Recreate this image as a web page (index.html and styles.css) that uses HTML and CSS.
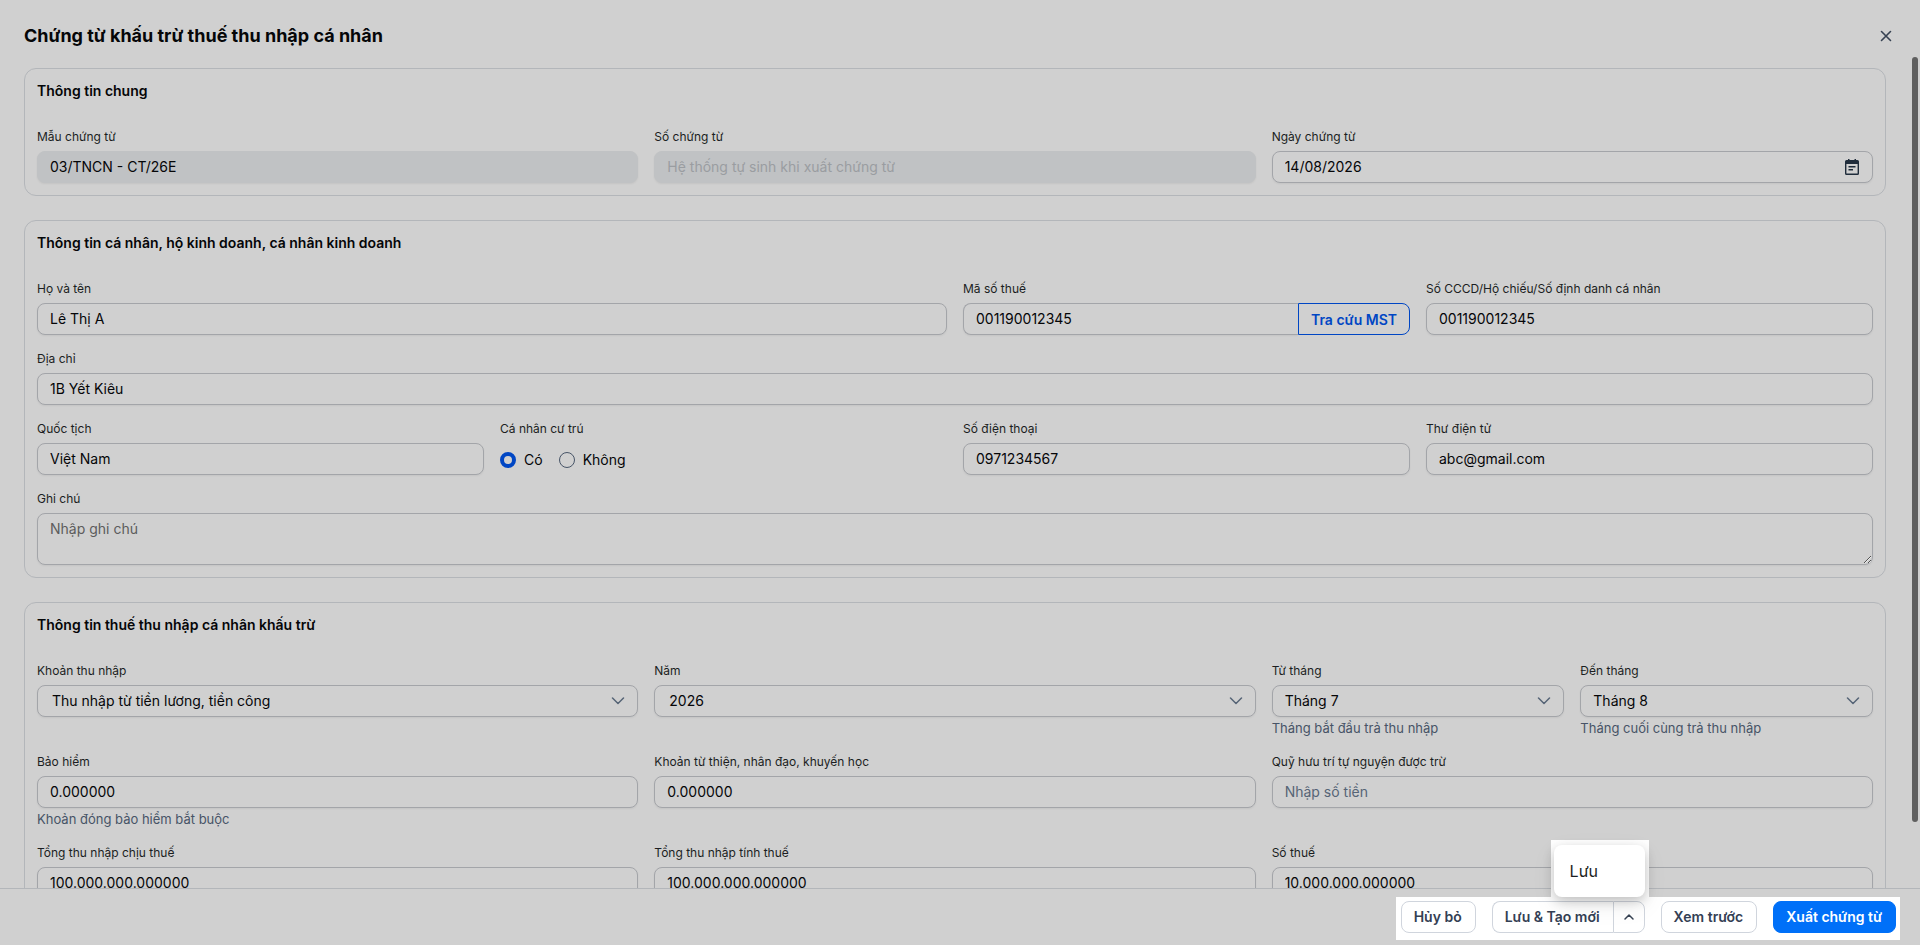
FILE: index.html
```html
<!DOCTYPE html>
<html lang="vi">
<head>
<meta charset="utf-8" />
<meta name="viewport" content="width=device-width, initial-scale=1" />
<title>Chứng từ khấu trừ thuế thu nhập cá nhân</title>
<link rel="stylesheet" href="styles.css">
</head>

<body>
<div class="page">
	<header class="head">
		<h1>Chứng từ khấu trừ thuế thu nhập cá nhân</h1>
		<button type="button" class="close" aria-label="Đóng">
			<svg width="12" height="12" viewBox="0 0 12 12"><path d="M1.5 1.5l9 9M10.5 1.5l-9 9" fill="none" stroke="#364152" stroke-width="1.6" stroke-linecap="round"/></svg>
		</button>
	</header>

	<div class="main">
		<form class="content" id="form">
			<section class="card">
				<h2>Thông tin chung</h2>
				<div class="grid">
					<div class="field col4">
						<label for="mau">Mẫu chứng từ</label>
						<input type="text" id="mau" class="box" value="03/TNCN - CT/26E" disabled>
					</div>
					<div class="field col4">
						<label for="so">Số chứng từ</label>
						<input type="text" id="so" class="box" placeholder="Hệ thống tự sinh khi xuất chứng từ" disabled>
					</div>
					<div class="field col4">
						<label for="ngay">Ngày chứng từ</label>
						<div class="wrap">
							<input type="text" id="ngay" class="box" value="14/08/2026">
							<svg class="icon_date" width="16" height="18" viewBox="0 0 16 18"><path fill="#1f2c3b" fill-rule="evenodd" d="M4 1h1.500v1h5V1H12v1h1.500A1.500 1.500 0 0 1 15 3.500v12a1.500 1.500 0 0 1-1.500 1.500h-11A1.500 1.500 0 0 1 1 15.500v-12A1.500 1.500 0 0 1 2.500 2H4zM2.400 6v9.600h11.200V6z"/><path d="M4.500 8.700h7M4.500 11.700h4.500" fill="none" stroke="#1f2c3b" stroke-width="1.500"/></svg>
						</div>
					</div>
				</div>
			</section>

			<section class="card">
				<h2>Thông tin cá nhân, hộ kinh doanh, cá nhân kinh doanh</h2>
				<div class="grid">
					<div class="field col6">
						<label for="ten">Họ và tên</label>
						<input type="text" id="ten" class="box" value="Lê Thị A">
					</div>
					<div class="field col3">
						<label for="mst">Mã số thuế</label>
						<div class="group">
							<input type="text" id="mst" class="box" value="001190012345">
							<button type="button" class="search">Tra cứu MST</button>
						</div>
					</div>
					<div class="field col3">
						<label for="cccd">Số CCCD/Hộ chiếu/Số định danh cá nhân</label>
						<input type="text" id="cccd" class="box" value="001190012345">
					</div>
					<div class="field col12">
						<label for="diachi">Địa chỉ</label>
						<input type="text" id="diachi" class="box" value="1B Yết Kiêu">
					</div>
					<div class="field col3">
						<label for="quoctich">Quốc tịch</label>
						<input type="text" id="quoctich" class="box" value="Việt Nam">
					</div>
					<fieldset class="field col3">
						<legend>Cá nhân cư trú</legend>
						<div class="radios">
							<label><input type="radio" name="cutru" checked>Có</label>
							<label><input type="radio" name="cutru">Không</label>
						</div>
					</fieldset>
					<div class="field col3">
						<label for="sdt">Số điện thoại</label>
						<input type="text" id="sdt" class="box" value="0971234567">
					</div>
					<div class="field col3">
						<label for="email">Thư điện tử</label>
						<input type="text" id="email" class="box" value="abc@gmail.com">
					</div>
					<div class="field col12">
						<label for="ghichu">Ghi chú</label>
						<textarea id="ghichu" class="box note" placeholder="Nhập ghi chú"></textarea>
					</div>
				</div>
			</section>

			<section class="card">
				<h2>Thông tin thuế thu nhập cá nhân khấu trừ</h2>
				<div class="grid">
					<div class="field col4">
						<label for="khoan">Khoản thu nhập</label>
						<div class="wrap">
							<select id="khoan" class="box wide"><option>Thu nhập từ tiền lương, tiền công</option></select>
							<svg class="arrow" width="14" height="8" viewBox="0 0 14 8"><path d="M1.500 1l5.500 5.500L12.500 1" fill="none" stroke="#566476" stroke-width="1.500" stroke-linecap="round" stroke-linejoin="round"/></svg>
						</div>
					</div>
					<div class="field col4">
						<label for="nam">Năm</label>
						<div class="wrap">
							<select id="nam" class="box wide"><option>2026</option></select>
							<svg class="arrow" width="14" height="8" viewBox="0 0 14 8"><path d="M1.500 1l5.500 5.500L12.500 1" fill="none" stroke="#566476" stroke-width="1.500" stroke-linecap="round" stroke-linejoin="round"/></svg>
						</div>
					</div>
					<div class="field col2">
						<label for="tu">Từ tháng</label>
						<div class="wrap">
							<select id="tu" class="box"><option>Tháng 7</option></select>
							<svg class="arrow" width="14" height="8" viewBox="0 0 14 8"><path d="M1.500 1l5.500 5.500L12.500 1" fill="none" stroke="#566476" stroke-width="1.500" stroke-linecap="round" stroke-linejoin="round"/></svg>
						</div>
						<p class="hint">Tháng bắt đầu trả thu nhập</p>
					</div>
					<div class="field col2">
						<label for="den">Đến tháng</label>
						<div class="wrap">
							<select id="den" class="box"><option>Tháng 8</option></select>
							<svg class="arrow" width="14" height="8" viewBox="0 0 14 8"><path d="M1.500 1l5.500 5.500L12.500 1" fill="none" stroke="#566476" stroke-width="1.500" stroke-linecap="round" stroke-linejoin="round"/></svg>
						</div>
						<p class="hint">Tháng cuối cùng trả thu nhập</p>
					</div>
					<div class="field col4">
						<label for="baohiem">Bảo hiểm</label>
						<input type="text" id="baohiem" class="box" value="0.000000">
						<p class="hint">Khoản đóng bảo hiểm bắt buộc</p>
					</div>
					<div class="field col4">
						<label for="tuthien">Khoản từ thiện, nhân đạo, khuyến học</label>
						<input type="text" id="tuthien" class="box" value="0.000000">
					</div>
					<div class="field col4">
						<label for="huutri">Quỹ hưu trí tự nguyện được trừ</label>
						<input type="text" id="huutri" class="box" placeholder="Nhập số tiền">
					</div>
					<div class="field col4">
						<label for="chiuthue">Tổng thu nhập chịu thuế</label>
						<input type="text" id="chiuthue" class="box" value="100.000.000.000000">
					</div>
					<div class="field col4">
						<label for="tinhthue">Tổng thu nhập tính thuế</label>
						<input type="text" id="tinhthue" class="box" value="100.000.000.000000">
					</div>
					<div class="field col4">
						<label for="sothue">Số thuế</label>
						<input type="text" id="sothue" class="box" value="10.000.000.000000">
					</div>
				</div>
			</section>
		</form>
		<div class="track"><div class="thumb"></div></div>
	</div>

	<footer class="foot">
		<div class="actions">
			<button type="button" class="btn">Hủy bỏ</button>
			<div class="split">
				<button type="button" class="btn btn_left">Lưu &amp; Tạo mới</button>
				<button type="button" class="btn btn_right" aria-label="Thêm">
					<svg width="12" height="8" viewBox="0 0 12 8"><path d="M2 6l4-4 4 4" fill="none" stroke="#364152" stroke-width="1.500" stroke-linecap="round" stroke-linejoin="round"/></svg>
				</button>
				<div class="pop">
					<div class="menu"><button type="button">Lưu</button></div>
				</div>
			</div>
			<button type="button" class="btn">Xem trước</button>
			<button type="submit" form="form" class="btn btn_blue">Xuất chứng từ</button>
		</div>
	</footer>
</div>
</body>
</html>
```
FILE: styles.css
```css
* {box-sizing:border-box;}
body {margin:0;background:#d0d0d0;color:#050608;font:14px/20px Inter,"Noto Sans",sans-serif;}
h1,h2,p {margin:0;}
button,input,select,textarea {font:inherit;color:inherit;margin:0;}
button {cursor:pointer;}
svg {display:block;}

.page {height:100vh;display:flex;flex-direction:column;overflow:hidden;}

/* header */
.head {display:flex;align-items:center;justify-content:space-between;padding:22px 24px 6px;flex:none;}
.head h1 {font-size:18px;line-height:28px;font-weight:650;}
.close {width:20px;height:20px;padding:4px;border:0;background:none;}

/* body */
.main {flex:1;min-height:0;display:flex;}
.content {flex:1;min-width:0;display:flex;flex-direction:column;gap:24px;padding:12px 26px 24px 24px;overflow-y:auto;scrollbar-width:none;}
.track {flex:none;width:8px;padding:1px 2px 0 0;}
.thumb {height:92%;border-radius:3px;background:#5f5f5f;}

.card {flex:none;border:1px solid #b3b6ba;border-radius:12px;padding:12px;}
.card h2 {font-size:14px;line-height:20px;font-weight:600;margin-bottom:27px;}
.grid {display:grid;grid-template-columns:repeat(12,minmax(0,1fr));gap:15px 16px;}
.col2 {grid-column:span 2;}
.col3 {grid-column:span 3;}
.col4 {grid-column:span 4;}
.col6 {grid-column:span 6;}
.col12 {grid-column:span 12;}

.field {min-width:0;margin:0;padding:0;border:0;}
.field > label,.field legend {display:block;padding:0;margin-bottom:5px;font-size:12px;line-height:18px;color:#1b1e22;}
.box {display:block;width:100%;height:32px;padding:0 12px 2px;border:1px solid #a3a5a9;border-radius:8px;background:#d0d0d0;box-shadow:0 1px 2px rgba(0,0,0,.06);outline:none;appearance:none;}
select.box {padding-bottom:0;}
.box::placeholder {color:#566476;opacity:1;}
.box:disabled {background:#c0c2c4;border-color:#c0c2c4;color:#050608;opacity:1;}
.box:disabled::placeholder {color:#9a9da1;}
.note {height:52px;padding:5px 12px;resize:vertical;}
.note::placeholder {color:#5c5c5c;}
.wide {padding-left:14px;}
.wrap {position:relative;}
.arrow {position:absolute;right:13px;top:12px;pointer-events:none;}
.icon_date {position:absolute;right:13px;top:7px;pointer-events:none;}
.hint {margin-top:2px;padding-bottom:1px;font-size:13px;line-height:18px;color:#475467;}

.group {display:flex;}
.group .box {flex:1;min-width:0;border-right:0;border-radius:8px 0 0 8px;}
.search {flex:none;height:32px;padding:1px 12px 0;border:1px solid #0046c4;border-radius:0 8px 8px 0;background:none;color:#0046c4;font-weight:600;}

.radios {display:flex;gap:16px;height:32px;padding-top:1px;align-items:center;}
.radios label {display:flex;align-items:center;gap:8px;}
.radios input {appearance:none;width:16px;height:16px;border:1px solid #475467;border-radius:50%;}
.radios input:checked {border:4px solid #0046c4;}

/* footer */
.foot {flex:none;display:flex;justify-content:flex-end;padding:8px 20px 5px;border-top:1px solid #b3b6ba;}
.actions {display:flex;gap:16px;padding:4px 4px 7px 5px;background:#fff;}
.btn {height:32px;padding:0 13px 0 12px;border:1px solid #d0d5dd;border-radius:8px;background:#fff;color:#344054;font-weight:600;}
.btn_blue {background:#0070f8;border-color:#0070f8;color:#fff;}
.split {position:relative;display:flex;}
.btn_left {border-radius:8px 0 0 8px;border-right:0;}
.btn_right {width:32px;padding:0 9px;border-radius:0 8px 8px 0;}

.pop {position:absolute;right:-4px;bottom:36px;z-index:2;padding:5px 4px 0 3px;background:#fff;}
.menu {width:91px;padding:8px 0;border-radius:8px;background:#fff;box-shadow:0 4px 12px rgba(0,0,0,.2),0 8px 24px rgba(0,0,0,.08);}
.menu button {display:block;width:100%;height:36px;padding:0 16px;border:0;background:none;color:#1b1e22;font-size:16px;text-align:left;}
```
